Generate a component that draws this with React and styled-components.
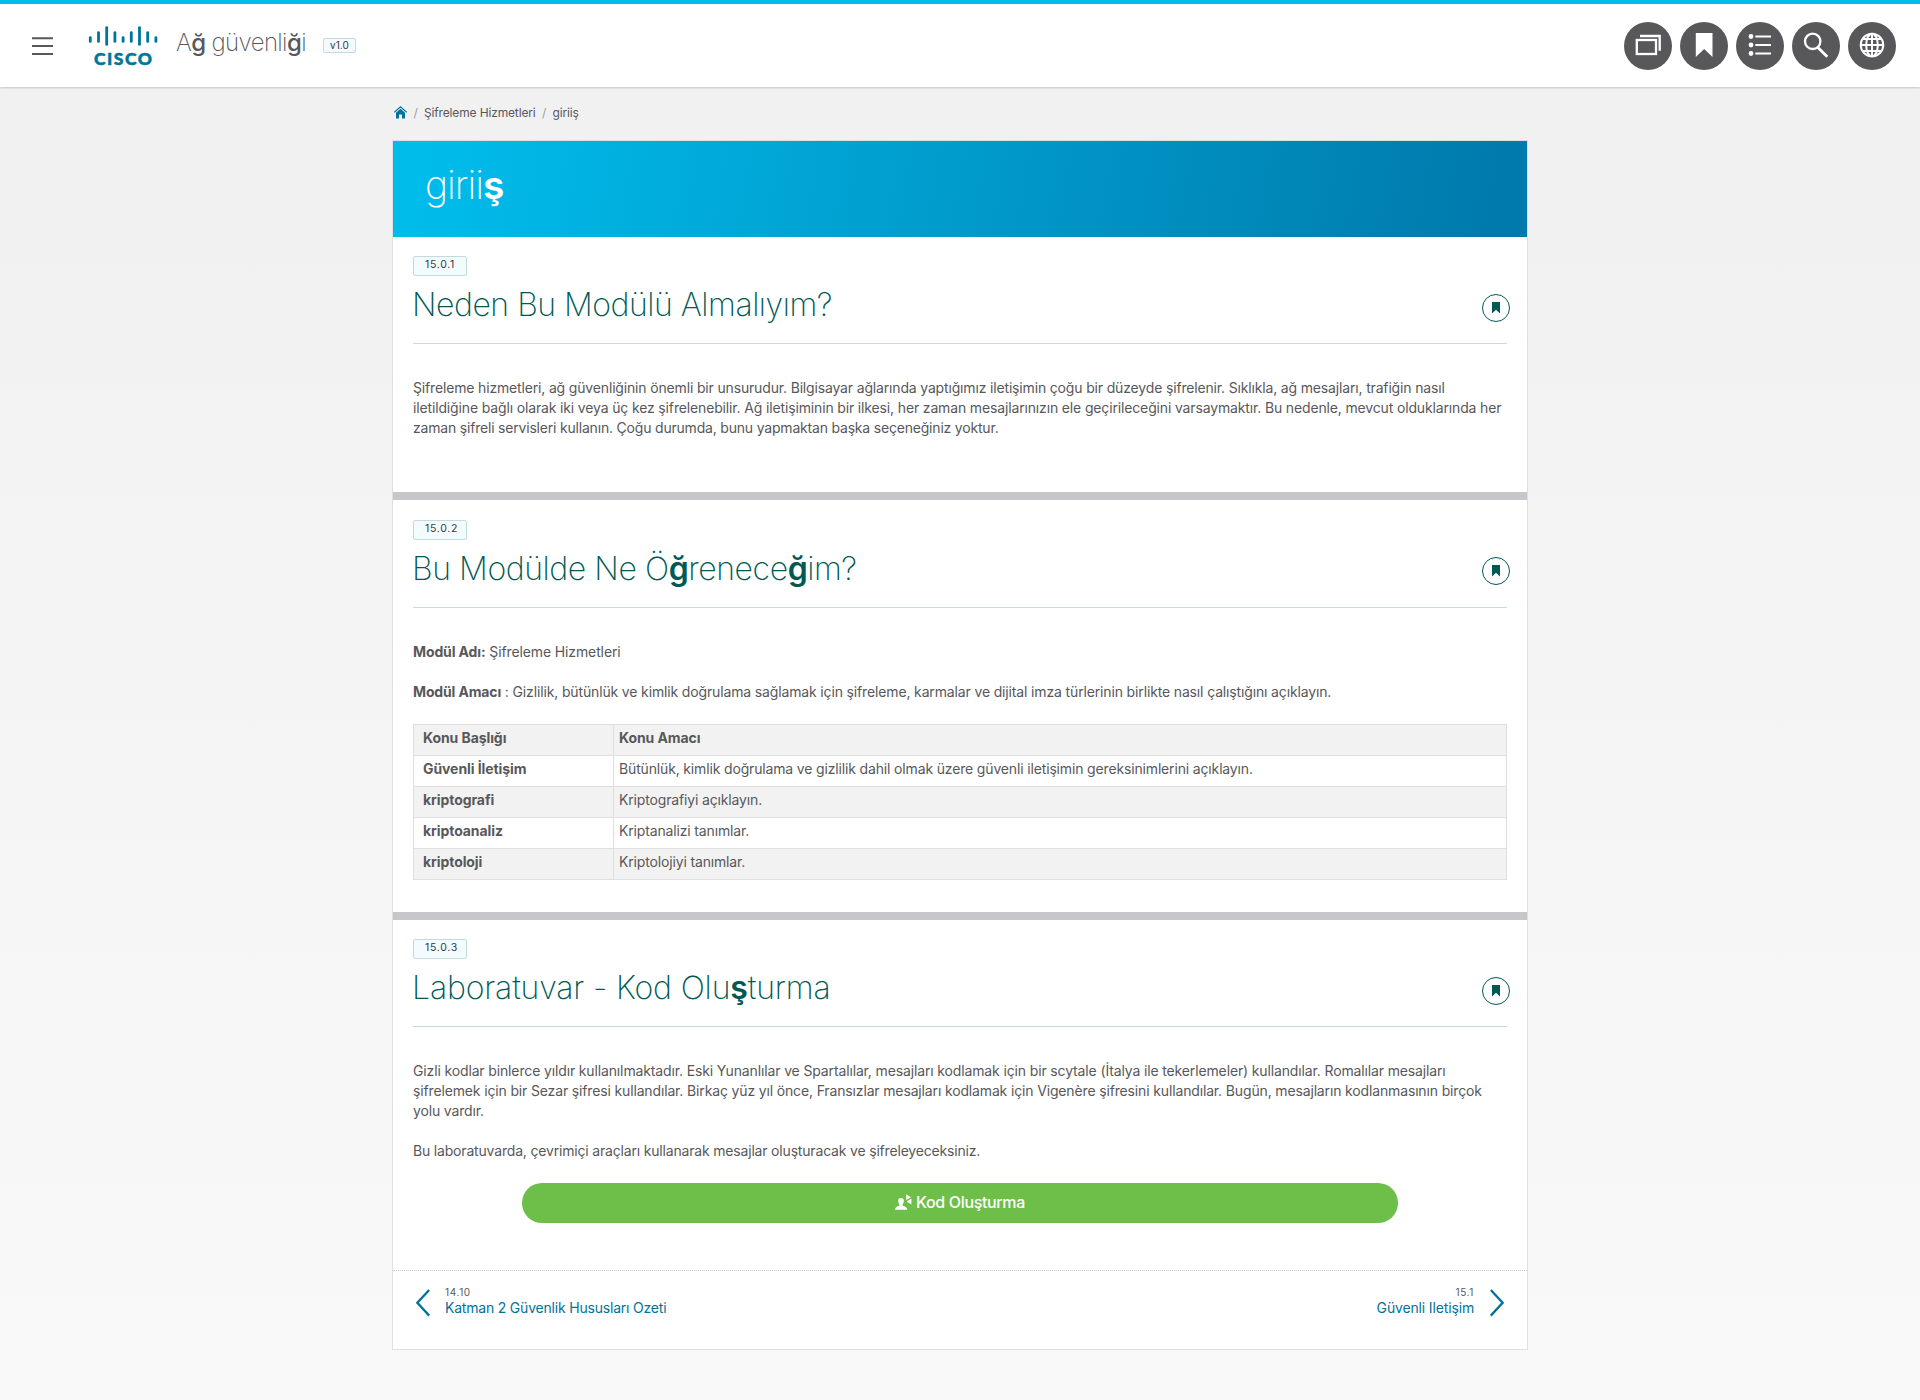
import React from "react";
import styled, { createGlobalStyle } from "styled-components";

const GlobalStyle = createGlobalStyle`
  *, *::before, *::after { box-sizing: border-box; }
  body {
    margin: 0;
    min-height: 1400px;
    background: linear-gradient(180deg, #f1f1f1 0, #f1f1f1 180px, #f9f9f9 1400px) no-repeat;
    color: #58585b;
    font-family: Inter, "Liberation Sans", sans-serif;
    font-size: 14px;
    line-height: 20px;
    letter-spacing: -0.155px;
  }
  h1, h2, p { margin: 0; font-weight: inherit; }
  svg { display: block; flex: none; }
`;

const Header = styled.header`
  display: flex;
  justify-content: space-between;
  height: 87px;
  padding: 0 24px 0 32px;
  background: #fff;
  border-top: 4px solid #00bceb;
  box-shadow: 0 1px 2px rgba(0, 0, 0, 0.18);
  position: relative;
`;

const Brand = styled.div`
  display: flex;
  align-items: flex-start;
`;

const MenuButton = styled.button`
  border: 0;
  padding: 0;
  margin-top: 33px;
  background: none;
  color: #58585b;
`;

const Logo = styled.svg`
  margin: 21px 0 0 35px;
  fill: #00759a;
  stroke: #00759a;
`;

const LogoText = styled.text`
  font: 900 17.5px Lato, sans-serif;
  letter-spacing: 0;
  stroke-width: 0.5px;
`;

const CourseTitle = styled.div`
  margin: 19px 0 0 16px;
  width: 147px;
  font-size: 24px;
  font-weight: 200;
  line-height: 40px;
  letter-spacing: -0.62px;
  white-space: nowrap;
`;

const Heavy = styled.span`
  font-weight: ${(p) => p.$weight || 600};
`;

const Version = styled.span`
  margin-top: 34px;
  width: 33px;
  height: 15px;
  border: 1px solid #c3dcd9;
  border-radius: 2px;
  background: #f2fbff;
  color: #39393b;
  font-size: 10px;
  line-height: 13px;
  letter-spacing: 0.1px;
  text-align: center;
`;

const Tools = styled.nav`
  display: flex;
  gap: 8px;
  margin-top: 18px;
`;

const ToolButton = styled.button`
  width: 48px;
  height: 48px;
  padding: 0;
  border: 0;
  border-radius: 50%;
  background: #58585b;
  color: #fff;
`;

const Page = styled.main`
  width: 1136px;
  margin: 0 auto;
`;

const Crumbs = styled.nav`
  display: flex;
  align-items: center;
  height: 53px;
  padding: 0 0 2px 2px;
  font-size: 12px;
  letter-spacing: -0.15px;
`;

const Slash = styled.span`
  width: 17px;
  text-align: center;
  color: #9e9ea2;
`;

const Card = styled.article`
  height: 1210px;
  border: 1px solid #dfdfdf;
  background: #fff;
`;

const Banner = styled.h1`
  height: 96px;
  padding: 19px 0 0 32px;
  background: linear-gradient(100deg, #00bceb 0%, #00bceb 3%, #007aac 97%);
  color: #fff;
  font-size: 39px;
  font-weight: 200;
  line-height: 50px;
  letter-spacing: -1px;
`;

const Section = styled.section`
  height: ${(p) => p.$height}px;
  padding: ${(p) => p.$top || 19}px 20px 0;
  border-bottom: ${(p) => (p.$last ? "0" : "8px solid #c6c7ca")};
`;

const Tag = styled.div`
  width: 54px;
  height: 20px;
  padding-left: 11px;
  border: 1px solid #c3dcd9;
  border-radius: 2px;
  background: #f2fbff;
  color: #39393b;
  font-size: 10.5px;
  line-height: 15px;
  letter-spacing: 0.7px;
`;

const TitleRow = styled.div`
  display: flex;
  justify-content: space-between;
  height: 68px;
  padding-top: 8px;
  border-bottom: 1px solid #c3dcd9;
`;

const Title = styled.h2`
  margin: 1px 0 0 -1px;
  color: #005953;
  font-size: 32px;
  font-weight: 200;
  line-height: 40px;
  letter-spacing: ${(p) => p.$spacing}px;
  white-space: nowrap;
`;

const MarkButton = styled.button`
  display: grid;
  place-items: center;
  width: 28px;
  height: 28px;
  margin: ${(p) => p.$offset}px -3px 0 0;
  padding: 0;
  border: 1px solid #005953;
  border-radius: 50%;
  background: #fff;
  color: #005953;
`;

const Body = styled.div`
  display: grid;
  gap: 20px;
  padding-top: 34px;
`;

const Line = styled.span`
  display: block;
  white-space: nowrap;
  letter-spacing: ${(p) => p.$spacing || -0.155}px;
`;

const Table = styled.div`
  margin-top: 2px;
  border: 1px solid #dfdfdf;
  border-bottom: 0;
`;

const Row = styled.div`
  display: grid;
  grid-template-columns: 200px 1fr;
  height: 31px;
  border-bottom: 1px solid #dfdfdf;
  background: ${(p) => (p.$shaded ? "#f2f2f2" : "#fff")};
`;

const Cell = styled.div`
  padding: 3px 0 0 ${(p) => (p.$first ? 9 : 5)}px;
  border-right: ${(p) => (p.$first ? "1px solid #dfdfdf" : "0")};
  font-weight: ${(p) => (p.$bold ? 700 : 400)};
  letter-spacing: ${(p) => (p.$bold ? -0.08 : -0.155)}px;
`;

const LabButton = styled.button`
  display: flex;
  align-items: center;
  justify-content: center;
  gap: 4px;
  width: 876px;
  height: 40px;
  margin: 2px auto 0;
  padding: 0 0 2px;
  border: 0;
  border-radius: 20px;
  background: #6ebe4a;
  color: #fff;
  font: 500 16px/20px Inter, sans-serif;
  letter-spacing: -0.35px;
`;

const Pager = styled.footer`
  display: flex;
  justify-content: space-between;
  padding: 15px 23px 0;
  border-top: 1px dotted #d0d0d2;
`;

const PageLink = styled.a`
  display: flex;
  gap: ${(p) => (p.$next ? 16 : 15)}px;
  color: #00739b;
  text-align: ${(p) => (p.$next ? "right" : "left")};
  letter-spacing: ${(p) => (p.$next ? -0.15 : -0.2)}px;

  svg { margin-top: 3px; }
`;

const PageNumber = styled.div`
  color: #58585b;
  font-size: 10px;
  line-height: 12px;
  letter-spacing: 0.65px;
`;

const stroke = { fill: "none", stroke: "currentColor" };

const MenuIcon = () => (
  <svg width="21" height="19" {...stroke} strokeWidth="2">
    <path d="M0 1.3H21M0 9H21M0 17H21" />
  </svg>
);

const CiscoLogo = () => {
  const spans = [[11, 17], [6, 17], [1, 20], [6, 17], [11, 17], [6, 17], [1, 20], [6, 17], [11, 17]];
  return (
    <Logo width="72" height="44" aria-label="Cisco">
      <g strokeWidth="2.8" strokeLinecap="round">
        {spans.map(([a, b], i) => (
          <path key={i} d={`M${2.3 + i * 8.2} ${a + 1.6}V${b - 0.6}`} />
        ))}
      </g>
      <LogoText x="6" y="40.3" textLength="58" lengthAdjust="spacing">CISCO</LogoText>
    </Logo>
  );
};

const WindowsIcon = () => (
  <svg width="48" height="48" {...stroke} strokeWidth="2.3">
    <rect x="12.8" y="18" width="19.2" height="14" />
    <path d="M16 14H35.7V28.7" />
  </svg>
);

const BookmarkIcon = () => (
  <svg width="48" height="48" fill="currentColor">
    <path d="M15.8 11H32.5V35L24.2 27L15.8 35Z" />
  </svg>
);

const ListIcon = () => (
  <svg width="48" height="48" {...stroke} strokeWidth="2">
    <path d="M19.3 14.5H35M19.3 23H35M19.3 31.5H35" />
    <g fill="currentColor" stroke="none">
      <circle cx="15" cy="14.5" r="2.4" />
      <circle cx="15" cy="23" r="2.4" />
      <circle cx="15" cy="31.5" r="2.4" />
    </g>
  </svg>
);

const SearchIcon = () => (
  <svg width="48" height="48" {...stroke} strokeWidth="2.3">
    <circle cx="20.7" cy="19.3" r="7.7" />
    <path d="M25.4 25L35.3 34.7" strokeWidth="2.8" />
  </svg>
);

const GlobeIcon = () => (
  <svg width="48" height="48" {...stroke} strokeWidth="2">
    <circle cx="24" cy="23" r="11.3" />
    <ellipse cx="24" cy="23" rx="5.8" ry="11.3" />
    <path d="M24 12V34M12.7 23H35.3M14.8 17H33.2M14.8 29H33.2" />
  </svg>
);

const HomeIcon = () => (
  <svg width="13" height="13" viewBox="0 0 13 13" fill="#00739b">
    <path d="M0.3 6.3L6.5 0.8L12.7 6.3" fill="none" stroke="#00739b" strokeWidth="1.1" />
    <path d="M6.5 2.8L11 6.8V12.6H8V8.5H5V12.6H2V6.8Z" />
  </svg>
);

const SmallBookmarkIcon = () => (
  <svg width="8" height="12" fill="currentColor">
    <path d="M0 0H8V11.5L4 7.8L0 11.5Z" />
  </svg>
);

const LabIcon = () => (
  <svg width="17" height="17" fill="currentColor">
    <path d="M3.2 6.4C3.2 4.6 4.4 3.9 6 3.9S8.8 4.6 8.8 6.4C8.8 8.5 8.2 9.5 7.6 10.4V11.7C10 12.3 12.2 13.2 12.3 15.7H0C0.1 13.2 2 12.3 4.4 11.7V10.4C3.8 9.5 3.2 8.5 3.2 6.4Z" />
    <path d="M11.2 0.3L16 3.2L11.2 6Z M16.4 4.6V10.6L11.6 7.4Z" />
  </svg>
);

const Chevron = ({ next }) => (
  <svg width="14" height="28" {...stroke} strokeWidth="2.3">
    <path d={next ? "M0.8 1L12.6 13.8L0.8 26.6" : "M13.2 1L1.4 13.8L13.2 26.6"} />
  </svg>
);

const tools = [WindowsIcon, BookmarkIcon, ListIcon, SearchIcon, GlobeIcon];

const topics = [
  ["Güvenli İletişim", "Bütünlük, kimlik doğrulama ve gizlilik dahil olmak üzere güvenli iletişimin gereksinimlerini açıklayın."],
  ["kriptografi", "Kriptografiyi açıklayın."],
  ["kriptoanaliz", "Kriptanalizi tanımlar."],
  ["kriptoloji", "Kriptolojiyi tanımlar."],
];

const SectionHead = ({ number, spacing, markOffset = 10, children }) => (
  <>
    <Tag>{number}</Tag>
    <TitleRow>
      <Title $spacing={spacing}>{children}</Title>
      <MarkButton $offset={markOffset}><SmallBookmarkIcon /></MarkButton>
    </TitleRow>
  </>
);

export default function App() {
  return (
    <>
      <GlobalStyle />
      <Header>
        <Brand>
          <MenuButton><MenuIcon /></MenuButton>
          <CiscoLogo />
          <CourseTitle>
            A<Heavy $weight={500}>ğ</Heavy> güvenli<Heavy $weight={500}>ğ</Heavy>i
          </CourseTitle>
          <Version>v1.0</Version>
        </Brand>
        <Tools>
          {tools.map((Icon, i) => (
            <ToolButton key={i}><Icon /></ToolButton>
          ))}
        </Tools>
      </Header>
      <Page>
        <Crumbs>
          <HomeIcon />
          <Slash>/</Slash>
          <span>Şifreleme Hizmetleri</span>
          <Slash>/</Slash>
          <span>giriiş</span>
        </Crumbs>
        <Card>
          <Banner>girii<Heavy>ş</Heavy></Banner>
          <Section $height={263}>
            <SectionHead number="15.0.1" spacing={-0.48}>Neden Bu Modülü Almalıyım?</SectionHead>
            <Body>
              <p>
                <Line $spacing={-0.162}>Şifreleme hizmetleri, ağ güvenliğinin önemli bir unsurudur. Bilgisayar ağlarında yaptığımız iletişimin çoğu bir düzeyde şifrelenir. Sıklıkla, ağ mesajları, trafiğin nasıl</Line>
                <Line $spacing={-0.148}>iletildiğine bağlı olarak iki veya üç kez şifrelenebilir. Ağ iletişiminin bir ilkesi, her zaman mesajlarınızın ele geçirileceğini varsaymaktır. Bu nedenle, mevcut olduklarında her</Line>
                <Line $spacing={-0.195}>zaman şifreli servisleri kullanın. Çoğu durumda, bunu yapmaktan başka seçeneğiniz yoktur.</Line>
              </p>
            </Body>
          </Section>
          <Section $height={420} $top={20}>
            <SectionHead number="15.0.2" spacing={-0.43} markOffset={9}>
              Bu Modülde Ne Ö<Heavy>ğ</Heavy>renece<Heavy>ğ</Heavy>im?
            </SectionHead>
            <Body>
              <Line as="p" $spacing={-0.12}><Heavy $weight={700}>Modül Adı:</Heavy> Şifreleme Hizmetleri</Line>
              <Line as="p" $spacing={-0.145}><Heavy $weight={700}>Modül Amacı</Heavy> : Gizlilik, bütünlük ve kimlik doğrulama sağlamak için şifreleme, karmalar ve dijital imza türlerinin birlikte nasıl çalıştığını açıklayın.</Line>
              <Table>
                <Row $shaded>
                  <Cell $first $bold>Konu Başlığı</Cell>
                  <Cell $bold>Konu Amacı</Cell>
                </Row>
                {topics.map(([topic, goal], i) => (
                  <Row key={topic} $shaded={i % 2 === 1}>
                    <Cell $first $bold>{topic}</Cell>
                    <Cell>{goal}</Cell>
                  </Row>
                ))}
              </Table>
            </Body>
          </Section>
          <Section $height={350} $last>
            <SectionHead number="15.0.3" spacing={-0.15}>
              Laboratuvar - Kod Olu<Heavy>ş</Heavy>turma
            </SectionHead>
            <Body>
              <p>
                <Line $spacing={-0.138}>Gizli kodlar binlerce yıldır kullanılmaktadır. Eski Yunanlılar ve Spartalılar, mesajları kodlamak için bir scytale (İtalya ile tekerlemeler) kullandılar. Romalılar mesajları</Line>
                <Line $spacing={-0.148}>şifrelemek için bir Sezar şifresi kullandılar. Birkaç yüz yıl önce, Fransızlar mesajları kodlamak için Vigenère şifresini kullandılar. Bugün, mesajların kodlanmasının birçok</Line>
                <Line>yolu vardır.</Line>
              </p>
              <Line as="p" $spacing={-0.18}>Bu laboratuvarda, çevrimiçi araçları kullanarak mesajlar oluşturacak ve şifreleyeceksiniz.</Line>
              <LabButton><LabIcon />Kod Oluşturma</LabButton>
            </Body>
          </Section>
          <Pager>
            <PageLink>
              <Chevron />
              <div>
                <PageNumber>14.10</PageNumber>
                Katman 2 Güvenlik Hususları Ozeti
              </div>
            </PageLink>
            <PageLink $next>
              <div>
                <PageNumber>15.1</PageNumber>
                Güvenli Iletişim
              </div>
              <Chevron next />
            </PageLink>
          </Pager>
        </Card>
      </Page>
    </>
  );
}
